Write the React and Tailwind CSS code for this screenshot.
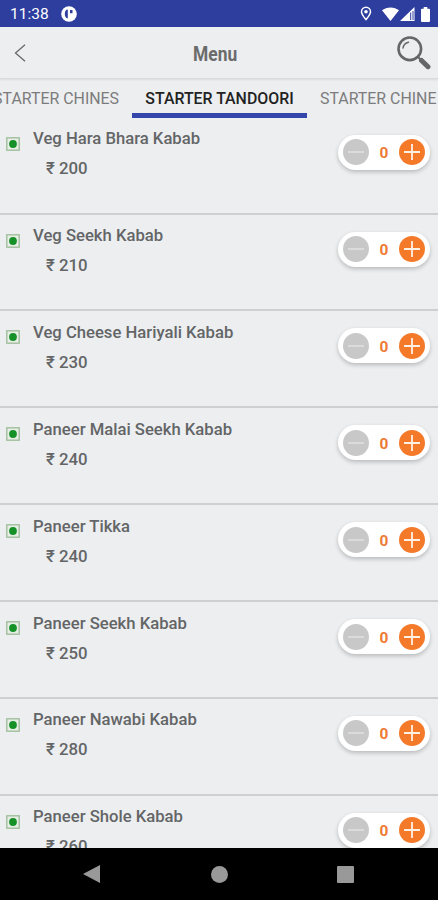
const items = [
  ['Veg Hara Bhara Kabab', 200],
  ['Veg Seekh Kabab', 210],
  ['Veg Cheese Hariyali Kabab', 230],
  ['Paneer Malai Seekh Kabab', 240],
  ['Paneer Tikka', 240],
  ['Paneer Seekh Kabab', 250],
  ['Paneer Nawabi Kabab', 280],
  ['Paneer Shole Kabab', 260],
];

function StatusBar() {
  return (
    <div className="flex h-[27px] shrink-0 items-center bg-[#2d3e9e] pl-[10px] pr-[8px] text-white">
      <span className="mt-[3px] text-[15.5px] leading-none">11:38</span>
      <svg className="ml-[12px] mt-px size-4" viewBox="0 0 16 16">
        <circle cx="8" cy="8" r="7.8" fill="#fff" />
        <path d="M6.800 3.600v8.800C4.800 12.400 3.800 10.400 3.800 8s1-4.400 3-4.400zM9 4h2.500v3.200H9z" fill="#2d3e9e" />
      </svg>
      <svg className="ml-auto h-[15px] w-[12px]" viewBox="0 0 12 15" fill="none" stroke="#fff" strokeWidth="1.500">
        <path d="M6 13.600C3.500 10.500 1.500 8.200 1.500 5.700a4.500 4.500 0 0 1 9 0c0 2.500-2 4.800-4.500 7.900z" />
        <circle cx="6" cy="5.700" r="1.800" fill="#fff" stroke="none" />
      </svg>
      <svg className="ml-[10px] h-[14px] w-[17px]" viewBox="0 0 17 14" fill="#fff">
        <path d="M0 3.300C4.600-.6 12.400-.6 17 3.300L8.500 14z" />
      </svg>
      <svg className="ml-[1px] mt-px h-[14px] w-[15px]" viewBox="0 0 15 14">
        <path d="M0 14 14.500 0v14z" fill="#fff" />
        <path d="M10.700 5.500v7.500M13 4v9" stroke="#2d3e9e" strokeWidth="1" />
      </svg>
      <svg className="ml-[6px] mt-px h-[15px] w-[9px]" viewBox="0 0 9 15" fill="#fff">
        <path d="M2.700 0h3.600v1.700H8a1 1 0 0 1 1 1V14a1 1 0 0 1-1 1H1a1 1 0 0 1-1-1V2.700a1 1 0 0 1 1-1h1.700z" />
      </svg>
    </div>
  );
}

function Header() {
  return (
    <div className="flex h-[52px] shrink-0 items-center border-b border-[#d9dadb] pl-[14px] pr-[7px] shadow-[0_1px_2px_rgba(0,0,0,0.08)]">
      <svg className="h-[18px] w-[12px]" viewBox="0 0 12 18" fill="none" stroke="#696969" strokeWidth="1.300">
        <path d="M11 .8 1.500 9l9.500 8.200" />
      </svg>
      <h1 className="ml-[167px] mt-[3px] origin-left scale-x-[0.87] text-[20px] font-bold leading-none text-[#6b6b6b]">Menu</h1>
      <svg className="ml-auto h-[34px] w-[34px]" viewBox="0 0 34 34" fill="none" stroke="#666">
        <circle cx="12.800" cy="12.800" r="11.300" strokeWidth="2.600" />
        <path d="M6 12a7 7 0 0 1 5.500-5.800" strokeWidth="1.500" strokeLinecap="round" />
        <path d="m20.500 20.500 3.500 3.500" strokeWidth="2" />
        <path d="m24.500 24.500 6.500 6.200" strokeWidth="5" strokeLinecap="round" />
      </svg>
    </div>
  );
}

function Tabs() {
  return (
    <div className="flex h-[39px] shrink-0 overflow-hidden whitespace-nowrap text-[15.900px] leading-[40px] text-[#7c7c7c]">
      <div className="flex w-[119px] shrink-0 justify-end">STARTER CHINES</div>
      <div className="ml-[13px] w-[175px] shrink-0 border-b-[5px] border-[#3546ab] text-center text-[15.900px] font-medium text-[#222]">STARTER TANDOORI</div>
      <div className="ml-[13px] shrink-0">STARTER CHINE</div>
    </div>
  );
}

function Stepper() {
  return (
    <div className="mr-[8px] mt-[17px] flex h-[35px] w-[92px] shrink-0 items-center justify-between rounded-full bg-white px-[5px] shadow-[0_2px_4px_rgba(0,0,0,0.22)]">
      <svg className="size-[26px]" viewBox="0 0 26 26">
        <circle cx="13" cy="13" r="13" fill="#c8c8c8" />
        <path d="M5 13h16" stroke="#e2e2e2" strokeWidth="1.500" />
      </svg>
      <span className="mt-[2px] scale-x-[1.1] text-[14px] font-bold leading-none text-[#ed7b35]">0</span>
      <svg className="size-[26px]" viewBox="0 0 26 26">
        <circle cx="13" cy="13" r="13" fill="#f47a2a" />
        <path d="M5 13h16M13 5v16" stroke="#fff0e4" strokeWidth="1.800" />
      </svg>
    </div>
  );
}

function Item({ name, price }) {
  return (
    <div className="flex h-[96.900px] shrink-0 items-start border-b-2 border-[#cdcfd1]">
      <svg className="ml-[6px] mt-[19px] size-[14px] shrink-0" viewBox="0 0 14 14">
        <rect x=".8" y=".8" width="12.400" height="12.400" fill="#e7eee5" stroke="#9cba98" strokeWidth="1.300" />
        <circle cx="7" cy="7" r="3.900" fill="#159127" />
      </svg>
      <div className="ml-[13px] mt-[10.500px] flex-1 whitespace-nowrap font-medium text-[#636566]">
        <div className="text-[16.660px] leading-[22px]">{name}</div>
        <div className="ml-[13px] mt-[7px] text-[16.800px] leading-[22px]">₹ {price}</div>
      </div>
      <Stepper />
    </div>
  );
}

export default function App() {
  return (
    <div className="flex h-[900px] w-[438px] flex-col overflow-hidden bg-[#eceef0] font-['Roboto',sans-serif]">
      <StatusBar />
      <Header />
      <Tabs />
      <div className="-mt-[0.400px] flex min-h-0 flex-1 flex-col overflow-hidden">
        {items.map(([name, price]) => (
          <Item key={name} name={name} price={price} />
        ))}
      </div>
      <div className="flex h-[52px] shrink-0 items-center bg-black pl-[83px]">
        <svg className="h-[18px] w-[17px]" viewBox="0 0 17 18" fill="#999">
          <path d="M17 0v18L0 9z" />
        </svg>
        <div className="ml-[111px] size-[17px] rounded-full bg-[#999]" />
        <div className="ml-[109px] size-[17px] rounded-[1px] bg-[#999]" />
      </div>
    </div>
  );
}
